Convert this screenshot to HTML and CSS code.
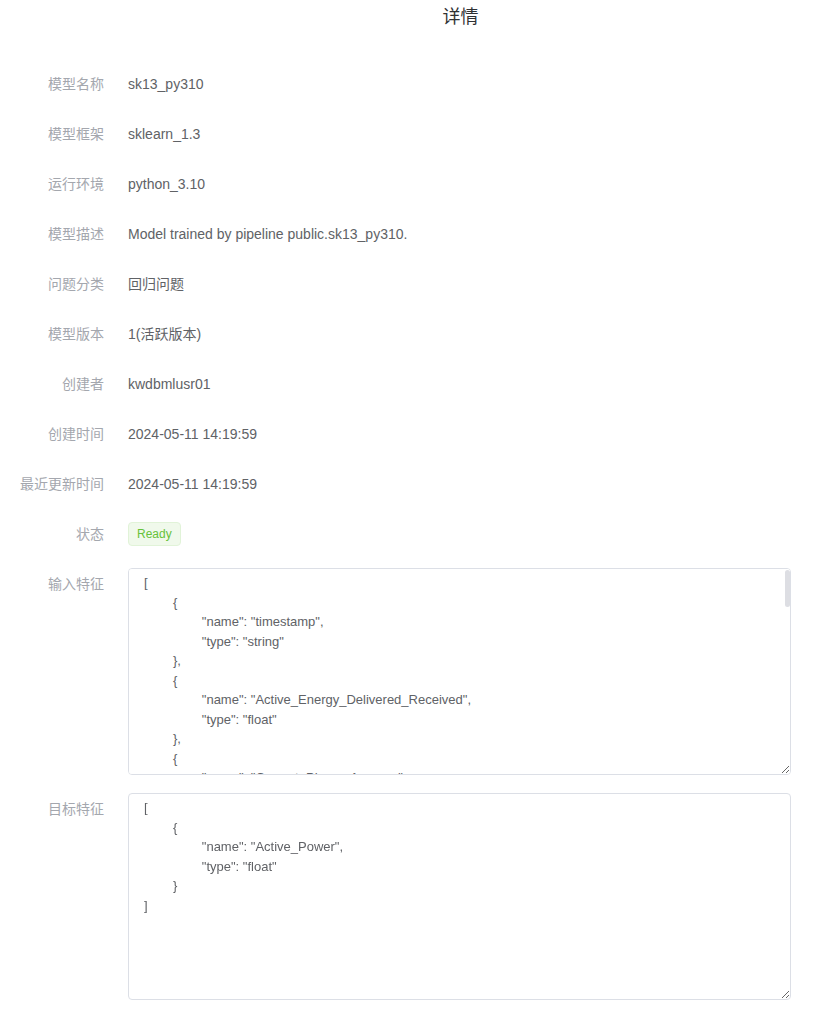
FILE: index.html
```html
<!DOCTYPE html>
<html lang="zh-CN">
<head>
<meta charset="utf-8">
<title>详情</title>
<link rel="stylesheet" href="styles.css">
</head>
<body>
<div class="page">
  <div class="header"><span class="title">详情</span></div>
  <div class="form">
    <div class="row"><div class="label">模型名称</div><div class="value">sk13_py310</div></div>
    <div class="row"><div class="label">模型框架</div><div class="value">sklearn_1.3</div></div>
    <div class="row"><div class="label">运行环境</div><div class="value">python_3.10</div></div>
    <div class="row"><div class="label">模型描述</div><div class="value">Model trained by pipeline public.sk13_py310.</div></div>
    <div class="row"><div class="label">问题分类</div><div class="value">回归问题</div></div>
    <div class="row"><div class="label">模型版本</div><div class="value">1(活跃版本)</div></div>
    <div class="row"><div class="label">创建者</div><div class="value">kwdbmlusr01</div></div>
    <div class="row"><div class="label">创建时间</div><div class="value">2024-05-11 14:19:59</div></div>
    <div class="row"><div class="label">最近更新时间</div><div class="value">2024-05-11 14:19:59</div></div>
    <div class="row"><div class="label">状态</div><div class="value"><span class="tag">Ready</span></div></div>
    <div class="row"><div class="label">输入特征</div><div class="value"><div class="code-wrap"><textarea class="code" readonly>[
	{
		"name": "timestamp",
		"type": "string"
	},
	{
		"name": "Active_Energy_Delivered_Received",
		"type": "float"
	},
	{
		"name": "Current_Phase_Average",
		"type": "float"
	},
	{
		"name": "Current_Phase_A",
		"type": "float"
	},
	{
		"name": "Current_Phase_B",
		"type": "float"
	},
	{
		"name": "Current_Phase_C",
		"type": "float"
	},
	{
		"name": "Voltage_A_B",
		"type": "float"
	},
	{
		"name": "Voltage_B_C",
		"type": "float"
	},
	{
		"name": "Voltage_C_A",
		"type": "float"
	},
	{
		"name": "Voltage_L_L_Average",
		"type": "float"
	},
	{
		"name": "Reactive_Power",
		"type": "float"
	},
	{
		"name": "Apparent_Power",
		"type": "float"
	},
	{
		"name": "Power_Factor",
		"type": "float"
	},
	{
		"name": "Frequency",
		"type": "float"
	}
]</textarea><span class="thumb"></span></div></div></div>
    <div class="row"><div class="label">目标特征</div><div class="value"><div class="code-wrap"><textarea class="code" readonly>[
	{
		"name": "Active_Power",
		"type": "float"
	}
]</textarea></div></div></div>
  </div>
</div>
</body>
</html>
```
FILE: styles.css
```css
html, body {
  margin: 0;
  padding: 0;
  background: #ffffff;
}
body {
  font-family: "Liberation Sans", Arial, "Noto Sans CJK SC", sans-serif;
  color: #606266;
}
.page {
  width: 821px;
}
.header {
  height: 30px;
  padding-left: 100px;
  display: flex;
  justify-content: center;
  align-items: center;
}
.title {
  font-size: 18px;
  color: #303133;
  font-family: "Noto Sans CJK SC", sans-serif;
  font-weight: 400;
}
.form {
  padding-top: 38px;
  display: flex;
  flex-direction: column;
  gap: 18px;
}
.row {
  display: flex;
  align-items: flex-start;
  gap: 24px;
}
.label {
  width: 104px;
  flex: none;
  text-align: right;
  line-height: 30px;
  height: 32px;
  font-size: 14px;
  color: #a4a7ae;
  font-family: "Noto Sans CJK SC", sans-serif;
  white-space: nowrap;
}
.value {
  line-height: 32px;
  min-height: 32px;
  font-size: 14px;
  color: #606266;
  display: flex;
  align-items: center;
}
.tag {
  display: inline-block;
  height: 22px;
  line-height: 22px;
  padding: 0 8px;
  font-size: 12px;
  color: #67c23a;
  background: #f0f9eb;
  border: 1px solid #e1f3d8;
  border-radius: 4px;
}
.code-wrap {
  position: relative;
  line-height: 0;
}
.code {
  display: block;
  box-sizing: border-box;
  width: 663px;
  height: 207px;
  margin: 0;
  padding: 4px 15px 5px;
  border: 1px solid #dcdfe6;
  border-radius: 4px;
  font-family: "Liberation Sans", Arial, sans-serif;
  font-size: 13px;
  line-height: 19.5px;
  color: #606266;
  tab-size: 8;
  resize: vertical;
  outline: none;
  background: #fff;
}
.code::-webkit-scrollbar {
  width: 6px;
}
.code::-webkit-scrollbar-track {
  background: transparent;
}
.code::-webkit-scrollbar-thumb {
  background: #dddee3;
  border-radius: 3px;
}
.thumb {
  position: absolute;
  top: 2px;
  right: 1px;
  width: 5px;
  height: 37px;
  border-radius: 3px;
  background: #dddee3;
}
```
